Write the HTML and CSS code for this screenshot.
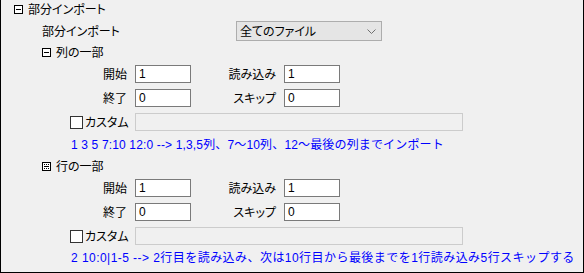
FILE: index.html
```html
<!DOCTYPE html>
<html lang="ja">
<head>
<meta charset="utf-8">
<link rel="stylesheet" href="styles.css">
</head>
<body>
<div class="panel">
  <div class="head">
    <svg class="tog" width="9" height="9" viewBox="0 0 9 9"><rect x="0.5" y="0.5" width="8" height="8" fill="#fff" stroke="#000"/><line x1="2" y1="4.5" x2="7" y2="4.5" stroke="#000"/></svg>
    <span>部分インポート</span>
  </div>
  <div class="mode">
    <span class="mode-label">部分インポート</span>
    <div class="select">
      <span>全てのファイル</span>
      <svg width="9" height="5" viewBox="0 0 9 5"><polyline points="0.5,0.5 4.5,4.5 8.5,0.5" fill="none" stroke="#707070"/></svg>
    </div>
  </div>

  <div class="sub">
    <svg class="tog" width="9" height="9" viewBox="0 0 9 9"><rect x="0.5" y="0.5" width="8" height="8" fill="#fff" stroke="#000"/><line x1="2" y1="4.5" x2="7" y2="4.5" stroke="#000"/></svg>
    <span>列の一部</span>
  </div>
  <div class="grid">
    <span class="lbl">開始</span><div class="input">1</div>
    <span class="lbl">読み込み</span><div class="input">1</div>
    <span class="lbl">終了</span><div class="input">0</div>
    <span class="lbl">スキップ</span><div class="input">0</div>
  </div>
  <div class="custom">
    <span class="check"></span><span class="clbl">カスタム</span>
    <div class="field"></div>
  </div>
  <div class="hint">1 3 5 7:10 12:0 --&gt; 1,3,5列、7～10列、12～最後の列までインポート</div>

  <div class="sub sub2">
    <svg class="tog" width="9" height="9" viewBox="0 0 9 9"><rect x="0.5" y="0.5" width="8" height="8" fill="#fff" stroke="#000"/><line x1="2" y1="2.5" x2="7" y2="2.5" stroke="#000" stroke-dasharray="1 1"/><line x1="2" y1="4.5" x2="7" y2="4.5" stroke="#000"/><line x1="2" y1="6.5" x2="7" y2="6.5" stroke="#000" stroke-dasharray="1 1"/><line x1="2.5" y1="2" x2="2.5" y2="7" stroke="#000" stroke-dasharray="1 1"/><line x1="6.5" y1="2" x2="6.5" y2="7" stroke="#000" stroke-dasharray="1 1"/></svg>
    <span>行の一部</span>
  </div>
  <div class="grid">
    <span class="lbl">開始</span><div class="input">1</div>
    <span class="lbl">読み込み</span><div class="input">1</div>
    <span class="lbl">終了</span><div class="input">0</div>
    <span class="lbl">スキップ</span><div class="input">0</div>
  </div>
  <div class="custom">
    <span class="check"></span><span class="clbl">カスタム</span>
    <div class="field"></div>
  </div>
  <div class="hint hint-last">2 10:0|1-5 --&gt; 2行目を読み込み、次は10行目から最後までを1行読み込み5行スキップする</div>
</div>
</body>
</html>
```

FILE: styles.css
```css
html, body {
  margin: 0;
  padding: 0;
  background: #f0f0f0;
}
body {
  font-family: "Noto Sans CJK JP", "Liberation Sans", sans-serif;
  font-size: 12px;
  color: #000;
  font-feature-settings: "palt";
}
.panel {
  width: 584px;
  height: 273px;
  box-sizing: border-box;
  border: 1px solid #000;
  border-top: none;
  background: #f0f0f0;
  overflow: hidden;
}
.tog {
  display: block;
  flex: none;
}
.head {
  height: 18px;
  display: flex;
  align-items: center;
  padding-left: 13px;
  gap: 5px;
  line-height: 1;
}
.mode {
  height: 26px;
  display: flex;
  align-items: center;
  padding-left: 41px;
  line-height: 1;
}
.mode-label {
  width: 194px;
}
.select {
  width: 146px;
  height: 20px;
  box-sizing: border-box;
  border: 1px solid #adadad;
  background: #e5e5e5;
  display: flex;
  align-items: center;
  justify-content: space-between;
  padding: 0 5px 0 3px;
}
.sub {
  height: 16px;
  display: flex;
  align-items: center;
  padding-left: 41px;
  gap: 5px;
  line-height: 1;
}
.sub2 {
  height: 20px;
}
.grid {
  display: grid;
  grid-template-columns: 126px 56px 77px 56px;
  grid-auto-rows: 24px;
  column-gap: 8px;
  align-items: center;
  line-height: 1;
}
.sub + .grid {
  margin-top: 2px;
}
.sub2 + .grid {
  margin-top: 0;
}
.lbl {
  text-align: right;
}
.input {
  height: 18px;
  box-sizing: border-box;
  border: 1px solid #7a7a7a;
  background: #fff;
  padding-left: 3px;
  display: flex;
  align-items: center;
  font-family: "Liberation Sans", sans-serif;
  font-size: 12px;
}
.custom {
  height: 24px;
  display: flex;
  align-items: center;
  padding-left: 69px;
  line-height: 1;
}
.check {
  width: 13px;
  height: 13px;
  box-sizing: border-box;
  border: 1px solid #333;
  background: #fff;
  margin-right: 2px;
}
.clbl {
  width: 50px;
}
.field {
  width: 328px;
  height: 18px;
  box-sizing: border-box;
  border: 1px solid #cccccc;
  background: #f0f0f0;
}
.hint {
  height: 22px;
  display: flex;
  align-items: center;
  padding-left: 70px;
  color: #0000ff;
  white-space: nowrap;
  line-height: 1;
  font-family: "Liberation Sans", "Noto Sans CJK JP", sans-serif;
  font-feature-settings: normal;
  letter-spacing: 0.15px;
}
.hint-last {
  height: 20px;
  letter-spacing: 0.45px;
}
```
